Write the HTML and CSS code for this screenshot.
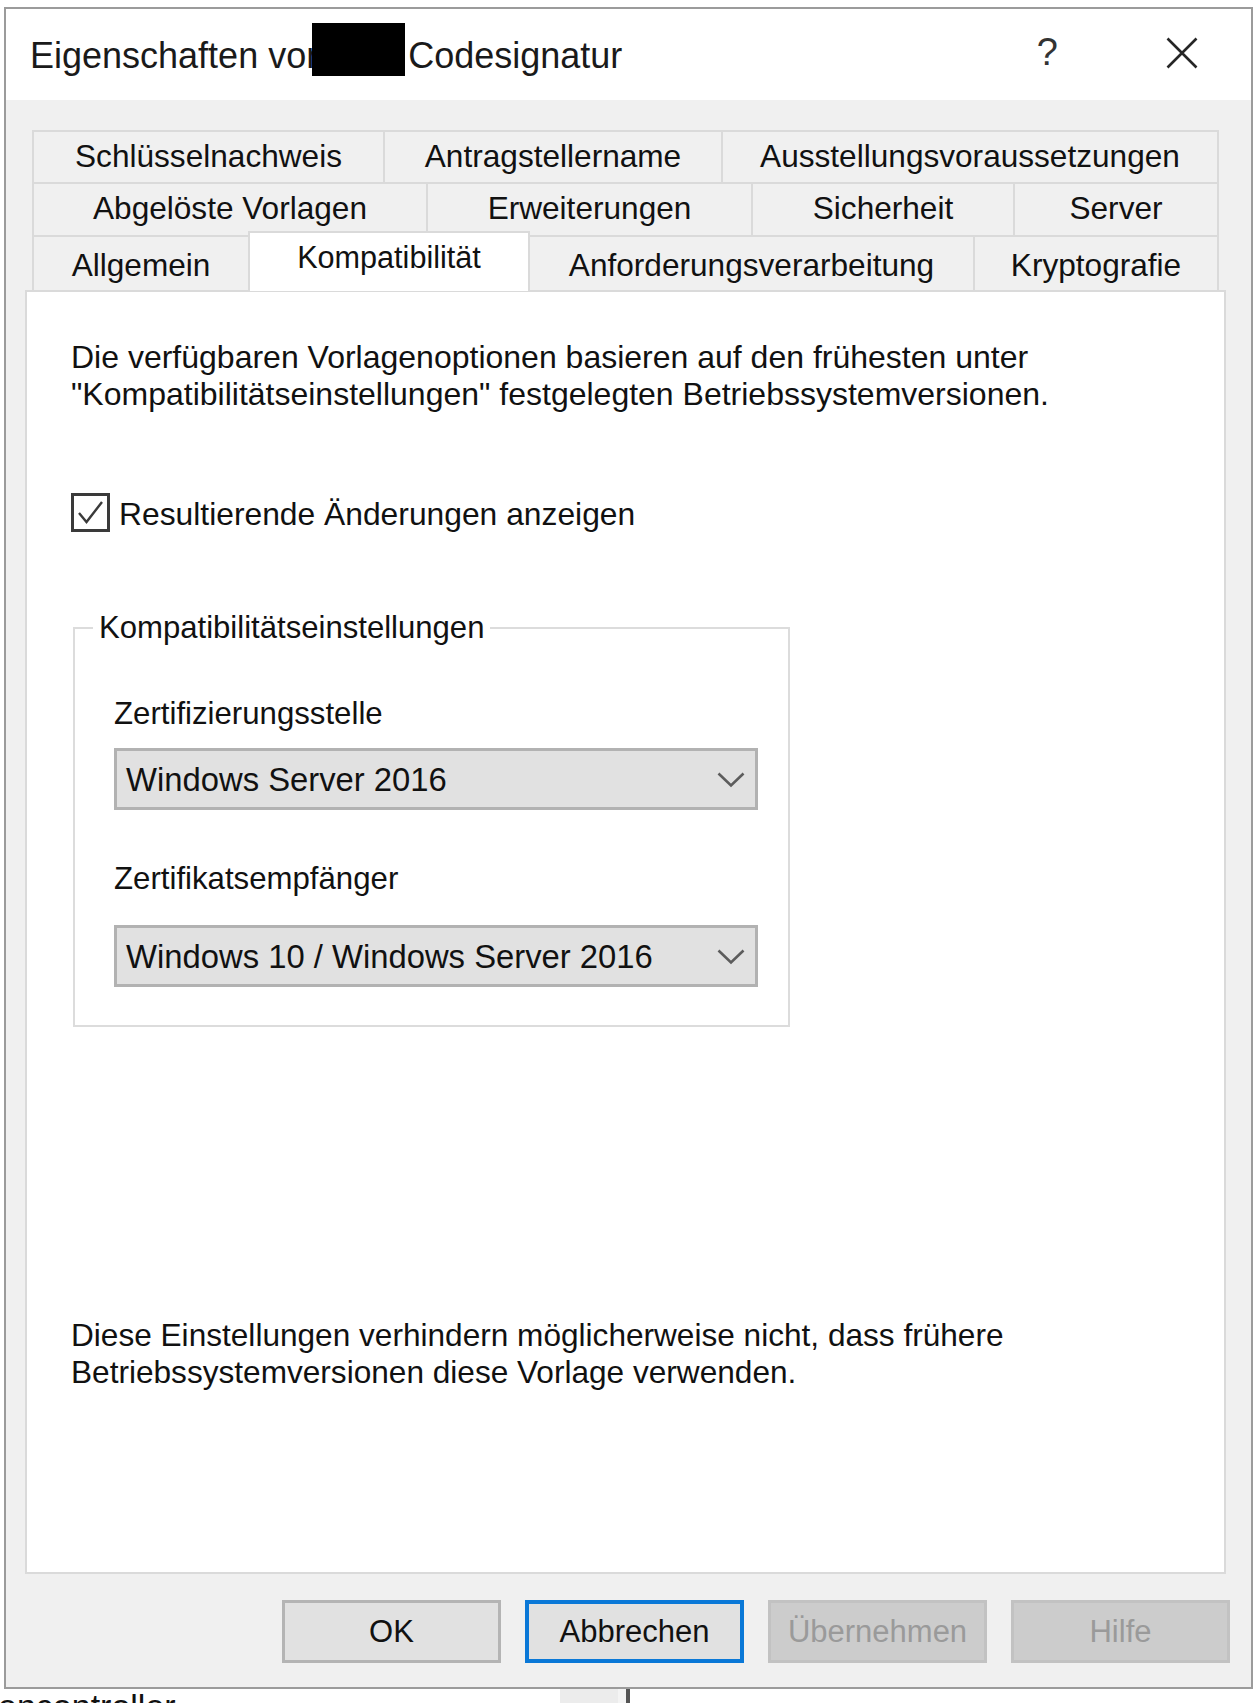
FILE: index.html
```html
<!DOCTYPE html>
<html>
	<head>
		<meta charset="utf-8">
		<title>Eigenschaften von Codesignatur</title>
		<link rel="stylesheet" href="styles.css">
	</head>
	<body>
		<div class="dialog">
			<div class="titlebar">
				<div class="title">Eigenschaften von<span class="redact"></span>Codesignatur</div>
				<div class="tb-help">?</div>
				<div class="tb-close">
					<svg width="32" height="32" viewBox="0 0 32 32"><path d="M1.5 1.5L30.5 30.5M30.5 1.5L1.5 30.5" stroke="#262626" stroke-width="2.6" fill="none"/></svg>
				</div>
			</div>
			<div class="client">
				<div class="tabs">
					<div class="tab-row row1">
						<div class="tab w351">Schlüsselnachweis</div>
						<div class="tab w338">Antragstellername</div>
						<div class="tab w498 last">Ausstellungsvoraussetzungen</div>
					</div>
					<div class="tab-row row2">
						<div class="tab w394">Abgelöste Vorlagen</div>
						<div class="tab w325">Erweiterungen</div>
						<div class="tab w262">Sicherheit</div>
						<div class="tab w206 last">Server</div>
					</div>
					<div class="tab-row row3">
						<div class="tab w216">Allgemein</div>
						<div class="tab tab-active w282">Kompatibilität</div>
						<div class="tab w443">Anforderungsverarbeitung</div>
						<div class="tab w246 last">Kryptografie</div>
					</div>
				</div>
				<div class="panel">
					<p class="intro">Die verfügbaren Vorlagenoptionen basieren auf den frühesten unter<br>"Kompatibilitätseinstellungen" festgelegten Betriebssystemversionen.</p>
					<div class="check-row">
						<span class="checkbox">
							<svg width="33" height="33" viewBox="0 0 33 33"><polyline points="5,17 12.5,26 28,6" stroke="#3a3a3a" stroke-width="2.4" fill="none"/></svg>
						</span>
						<span class="check-label">Resultierende Änderungen anzeigen</span>
					</div>
					<fieldset class="group">
						<legend>Kompatibilitätseinstellungen</legend>
						<div class="group-body">
							<div class="field-label first">Zertifizierungsstelle</div>
							<div class="combo">
								<span class="combo-text">Windows Server 2016</span>
								<svg class="chevron" width="28" height="16" viewBox="0 0 28 16"><polyline points="1.5,1.5 14,13.5 26.5,1.5" stroke="#5c5c5c" stroke-width="2.6" fill="none"/></svg>
							</div>
							<div class="field-label second">Zertifikatsempfänger</div>
							<div class="combo combo2">
								<span class="combo-text">Windows 10 / Windows Server 2016</span>
								<svg class="chevron" width="28" height="16" viewBox="0 0 28 16"><polyline points="1.5,1.5 14,13.5 26.5,1.5" stroke="#5c5c5c" stroke-width="2.6" fill="none"/></svg>
							</div>
						</div>
					</fieldset>
					<p class="note">Diese Einstellungen verhindern möglicherweise nicht, dass frühere<br>Betriebssystemversionen diese Vorlage verwenden.</p>
				</div>
				<div class="buttons">
					<div class="btn">OK</div>
					<div class="btn btn-default">Abbrechen</div>
					<div class="btn btn-disabled">Übernehmen</div>
					<div class="btn btn-disabled">Hilfe</div>
				</div>
			</div>
		</div>
		<div class="behind">
			<span class="behind-text">encontroller</span>
			<span class="behind-bar"></span>
		</div>
	</body>
</html>
```
FILE: styles.css
```css
*{
	margin: 0px;
	padding: 0px;
	box-sizing: border-box;
}
body{
	width: 1258px;
	height: 1704px;
	overflow: hidden;
	background: #fff;
	font-family: "Liberation Sans", Arial, sans-serif;
	font-size: 31px;
	color: #111;
}
.dialog{
	width: 1249px;
	margin: 7px 0 0 4px;
	border: 2px solid #9b9b9b;
	background: #f0f0f0;
}
.titlebar{
	height: 91px;
	background: #fff;
	display: flex;
	align-items: center;
	padding: 0 53px 0 24px;
}
.title{
	flex: 1;
	font-size: 36px;
	color: #1a1a1a;
	white-space: nowrap;
	margin-top: -9px;
}
.redact{
	display: inline-block;
	width: 93px;
	height: 53px;
	background: #000;
	margin: 0 3px 0 -14px;
	vertical-align: -8px;
}
.tb-help{
	font-size: 38px;
	color: #333;
	margin-right: 108px;
	margin-top: -4px;
}
.tb-close{
	width: 32px;
	height: 32px;
	margin-top: -4px;
}
.tb-close svg{
	display: block;
}
.client{
	height: 1587px;
	padding: 30px 25px 0 19px;
	display: flex;
	flex-direction: column;
}
.tabs{
	margin: 0 6px 0 7px;
}
.tab-row{
	display: flex;
	height: 53px;
}
.row1{
	height: 52px;
}
.row3{
	height: 55px;
}
.tab{
	flex: none;
	border: 2px solid #dadada;
	border-right: 0;
	border-bottom: 0;
	background: #f0f0f0;
	text-align: center;
	line-height: 48px;
	font-size: 31.6px;
	white-space: nowrap;
	color: #111;
}
.tab.last{
	border-right: 2px solid #dadada;
}
.row3 .tab{
	line-height: 56px;
}
.row3 .tab.tab-active{
	align-self: flex-start;
	height: 60px;
	margin-top: -4px;
	background: #fff;
	border-right: 2px solid #dadada;
	line-height: 48px;
	font-size: 30.6px;
	z-index: 2;
}
.tab-active + .tab{
	border-left: 0;
}
.w351{ width: 351px; }
.w338{ width: 338px; }
.w498{ width: 498px; }
.w394{ width: 394px; }
.w325{ width: 325px; }
.w262{ width: 262px; }
.w206{ width: 206px; }
.w216{ width: 216px; }
.w282{ width: 282px; }
.w443{ width: 443px; }
.w246{ width: 246px; }
.panel{
	height: 1284px;
	background: #fff;
	border: 2px solid #dadada;
	padding: 47px 0 181px 44px;
	display: flex;
	flex-direction: column;
}
.intro,.note{
	line-height: 37px;
	white-space: nowrap;
}
.intro{
	font-size: 32px;
}
.note{
	margin-top: auto;
	font-size: 31.6px;
}
.check-row{
	display: flex;
	align-items: center;
	margin-top: 80px;
	height: 39px;
}
.checkbox{
	width: 39px;
	height: 39px;
	border: 3px solid #3a3a3a;
	background: #fff;
}
.checkbox svg{
	display: block;
}
.check-label{
	margin-left: 9px;
	font-size: 31.8px;
	padding-top: 4px;
}
.group{
	width: 717px;
	margin: 77px 0 0 2px;
	border: 2px solid #dcdcdc;
	padding: 0 0 38px 0;
}
.group legend{
	margin-left: 18px;
	padding: 0 6px;
	line-height: 37px;
	font-size: 31.1px;
}
.group-body{
	padding-left: 39px;
}
.field-label{
	line-height: 37px;
	font-size: 31.2px;
}
.field-label.first{
	margin-top: 49px;
}
.field-label.second{
	margin-top: 50px;
}
.combo{
	width: 644px;
	height: 62px;
	margin-top: 16px;
	background: #e1e1e1;
	border: 3px solid #b2b2b2;
	display: flex;
	align-items: center;
	padding: 2px 10px 0 9px;
	font-size: 32.8px;
}
.combo2{
	margin-top: 28px;
}
.combo-text{
	flex: 1;
	white-space: nowrap;
}
.chevron{
	display: block;
}
.buttons{
	display: flex;
	justify-content: flex-end;
	gap: 24px;
	margin: 26px -4px 0 0;
}
.btn{
	width: 219px;
	height: 63px;
	background: #e1e1e1;
	border: 3px solid #b4b4b4;
	text-align: center;
	line-height: 57px;
	font-size: 31px;
	color: #111;
}
.btn-default{
	border: 4px solid #0a78d7;
	line-height: 55px;
}
.btn-disabled{
	background: #cccccc;
	border-color: #c2c2c2;
	color: #9a9a9a;
}
.behind{
	height: 14px;
	overflow: hidden;
	display: flex;
}
.behind-text{
	font-size: 34px;
	line-height: 34px;
	margin: 0 0 0 -2px;
	color: #111;
	width: 562px;
}
.behind-bar{
	width: 70px;
	height: 14px;
	background: #ececec;
	border-right: 4px solid #555;
	box-shadow: inset -8px 0 0 #f4f4f4;
}
```
